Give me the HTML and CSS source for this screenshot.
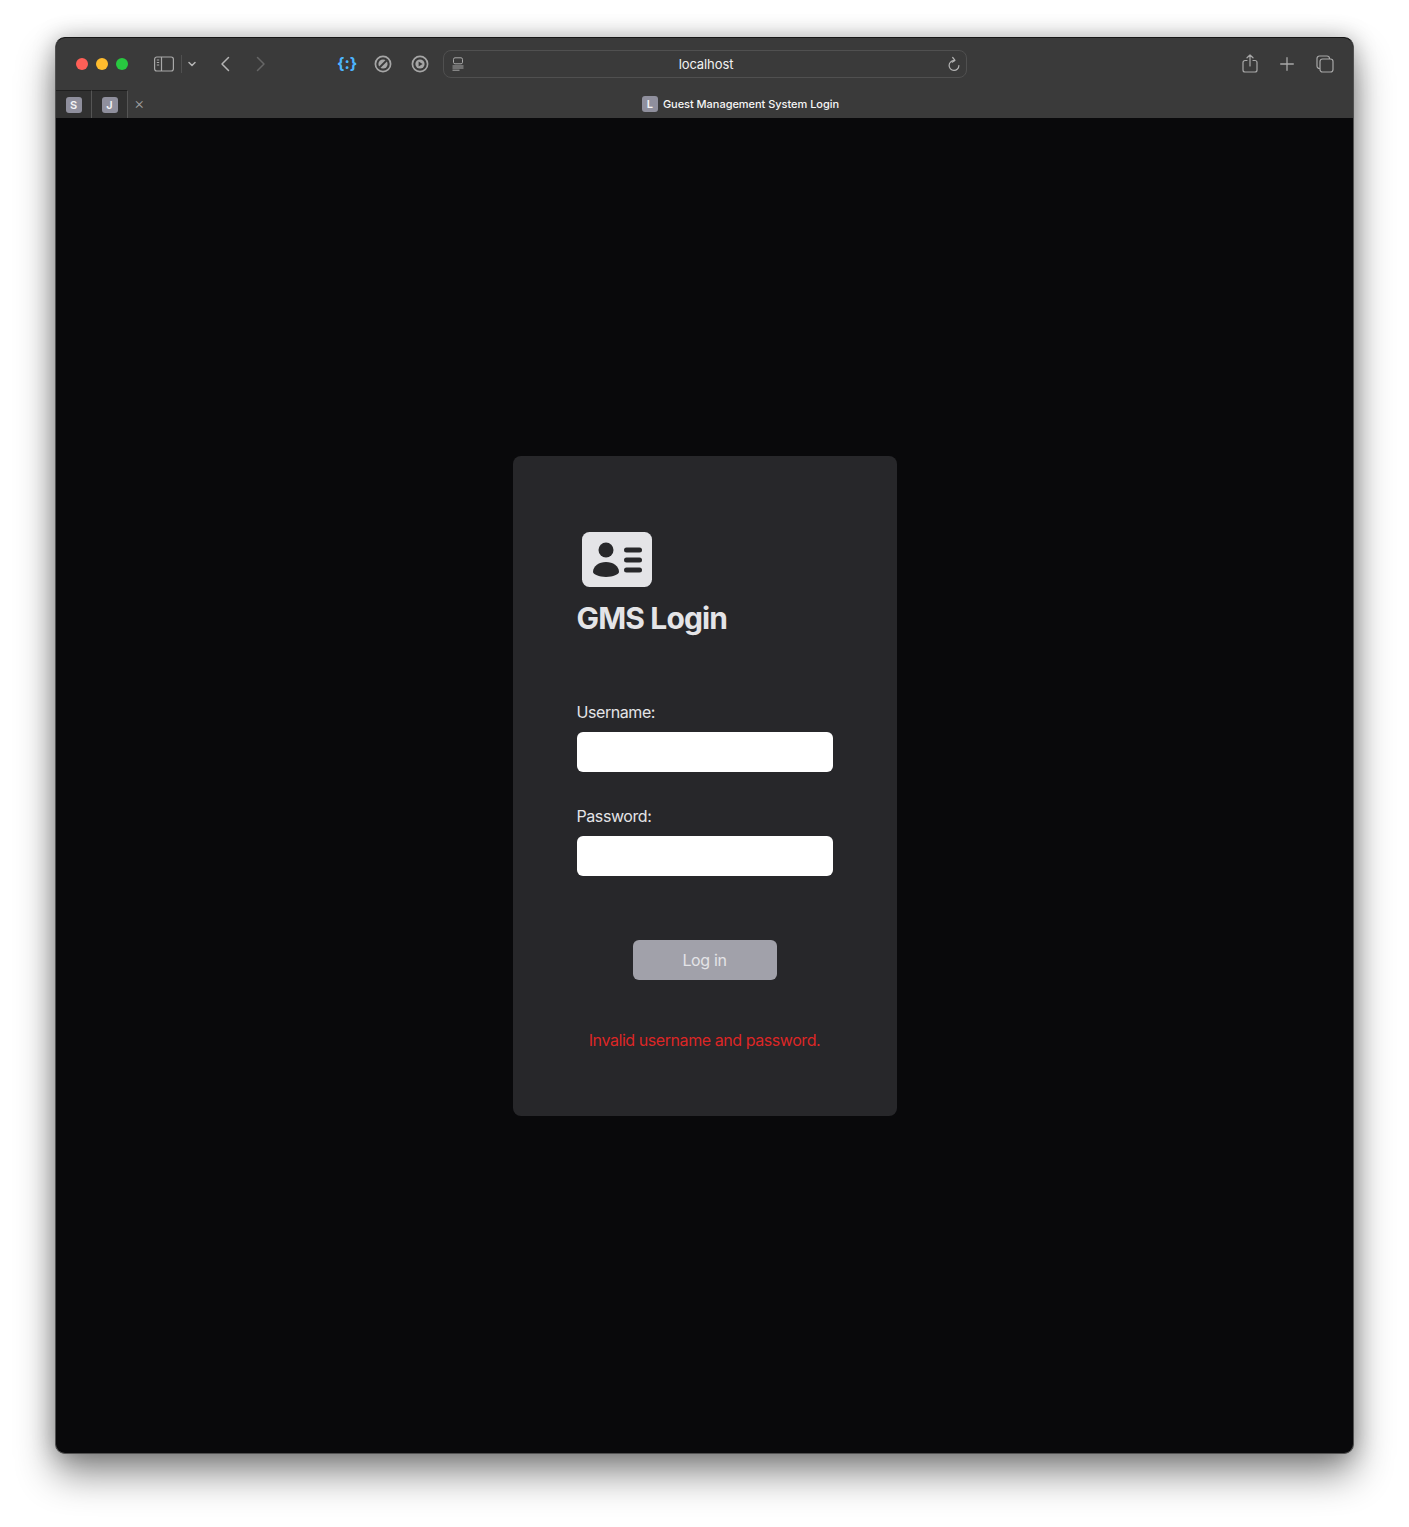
FILE: index.html
```html
<!DOCTYPE html>
<html lang="en">
<head>
  <meta charset="UTF-8">
  <title>Guest Management System Login</title>
  <link rel="stylesheet" href="styles.css">
  <meta name="viewport" content="width=device-width, initial-scale=1.0">
</head>
<body>

<div class="window">

  <div class="toolbar">
    <div class="lights">
      <span class="light red"></span>
      <span class="light yellow"></span>
      <span class="light green"></span>
    </div>

    <svg class="icon sidebar-icon" width="20" height="16" viewBox="0 0 20 16" fill="none" stroke="#a8a8a8" stroke-width="1.2">
      <rect x="0.6" y="1" width="18.8" height="14" rx="2.2"/>
      <path d="M7.5 1v14"/>
      <path d="M2.8 4h2.4M2.8 6.500h2.400M2.800 9h2.400" stroke-width="1"/>
    </svg>
    <span class="sep"></span>
    <svg class="icon chevron-icon" width="8" height="6" viewBox="0 0 8 6" fill="none" stroke="#b4b4b4" stroke-width="1.5" stroke-linecap="round" stroke-linejoin="round">
      <path d="M1 1.500l3 3 3-3"/>
    </svg>
    <svg class="icon back-icon" width="10" height="16" viewBox="0 0 10 16" fill="none" stroke="#b4b4b4" stroke-width="1.5" stroke-linecap="round" stroke-linejoin="round">
      <path d="M8.500 1.500L2 8l6.500 6.500"/>
    </svg>
    <svg class="icon forward-icon" width="10" height="16" viewBox="0 0 10 16" fill="none" stroke="#666" stroke-width="1.500" stroke-linecap="round" stroke-linejoin="round">
      <path d="M1.500 1.500L8 8l-6.500 6.500"/>
    </svg>

    <span class="ext-braces">{:}</span>
    <svg class="icon ext-icon compass" width="18" height="18" viewBox="0 0 18 18" fill="none" stroke="#a6a6a6">
      <circle cx="9" cy="9" r="7.600" stroke-width="1.700"/>
      <circle cx="9" cy="9" r="4.600" fill="#a6a6a6" stroke="none"/>
      <path d="M5.500 12.500l7-7" stroke="#3a3a3a" stroke-width="1.800"/>
    </svg>
    <svg class="icon ext-icon target" width="18" height="18" viewBox="0 0 18 18" fill="none" stroke="#a6a6a6">
      <circle cx="9" cy="9" r="7.600" stroke-width="1.700"/>
      <circle cx="9" cy="9" r="4.600" fill="#a6a6a6" stroke="none"/>
      <path d="M7.600 6.400v5.200L11.600 9z" fill="#3a3a3a" stroke="none"/>
    </svg>

    <div class="address">
      <svg width="12" height="14" viewBox="0 0 12 14" fill="none" stroke="#a8a8a8" stroke-width="1">
        <rect x="1.500" y="0.800" width="9" height="6" rx="1.500"/>
        <path d="M0.500 9h11M0.500 11h11M0.500 13.200h7"/>
      </svg>
      <span class="address-text">localhost</span>
      <svg width="12" height="16" viewBox="0 0 12 16" fill="none" stroke="#b4b4b4" stroke-width="1.200" stroke-linecap="round" stroke-linejoin="round">
        <path d="M6.300 4.600a4.900 4.900 0 1 0 4.600 4.900"/>
        <path d="M4.700 1.500L7 4.300 4.200 6.200"/>
      </svg>
    </div>

    <div class="toolbar-right">
      <svg class="icon" width="16" height="19" viewBox="0 0 16 19" fill="none" stroke="#a8a8a8" stroke-width="1.200" stroke-linecap="round" stroke-linejoin="round">
        <path d="M5 6.500H3a2 2 0 0 0-2 2V16a2 2 0 0 0 2 2h10a2 2 0 0 0 2-2V8.500a2 2 0 0 0-2-2h-2"/>
        <path d="M8 12V1M5 3.800L8 1l3 2.800"/>
      </svg>
      <svg class="icon" width="14" height="14" viewBox="0 0 14 14" fill="none" stroke="#a8a8a8" stroke-width="1.300" stroke-linecap="round">
        <path d="M7 0.700v12.600M0.700 7h12.600"/>
      </svg>
      <svg class="icon" width="18" height="18" viewBox="0 0 18 18" fill="none" stroke="#a8a8a8" stroke-width="1.200">
        <path d="M4 13.500H3.500a2.500 2.500 0 0 1-2.500-2.500V3.500A2.500 2.500 0 0 1 3.500 1H11a2.500 2.500 0 0 1 2.500 2.500V4"/>
        <rect x="4" y="4" width="13" height="13" rx="2.500"/>
      </svg>
    </div>
  </div>

  <div class="tabbar">
    <div class="tab"><span class="favicon">S</span></div>
    <div class="tab"><span class="favicon">J</span></div>
    <div class="tab-active">
      <span class="tab-close">&times;</span>
      <div class="tab-title"><span class="favicon">L</span>Guest Management System Login</div>
    </div>
  </div>

  <div class="page">
    <form class="card">
      <svg class="logo" width="80" height="80" viewBox="0 0 80 80">
        <rect x="5" y="12" width="70" height="55" rx="7.500" fill="#e4e4e7"/>
        <circle cx="29" cy="30" r="7.500" fill="#28282a"/>
        <path d="M16 52c0-6 6-10 13-10s13 4 13 10c0 2-6 5-13 5s-13-3-13-5z" fill="#28282a"/>
        <rect x="47" y="27.500" width="18" height="5" rx="2.500" fill="#28282a"/>
        <rect x="47" y="37.500" width="18" height="5" rx="2.500" fill="#28282a"/>
        <rect x="47" y="47.500" width="18" height="5" rx="2.500" fill="#28282a"/>
      </svg>
      <h1 class="title">GMS Login</h1>

      <label class="field-label" for="username">Username:</label>
      <input class="field-input" type="text" id="username">

      <label class="field-label second" for="password">Password:</label>
      <input class="field-input" type="password" id="password">

      <button class="login-btn" type="button">Log in</button>

      <p class="error">Invalid username and password.</p>
    </form>
  </div>

</div>

</body>
</html>
```

FILE: styles.css
```css
* {
  box-sizing: border-box;
}

body {
  margin: 0;
  padding: 37px 55px 73px;
  background-color: #fff;
  font-family: Inter, "Liberation Sans", sans-serif;
}

.window {
  height: 1417px;
  display: flex;
  flex-direction: column;
  border: 1px solid #515151;
  border-top-color: #161616;
  border-radius: 10px;
  overflow: hidden;
  background-color: #09090b;
  box-shadow: 0 20px 38px rgba(0, 0, 0, 0.45), 0 0 22px rgba(0, 0, 0, 0.25);
}

/* toolbar */

.toolbar {
  height: 52px;
  display: flex;
  align-items: center;
  padding-left: 20px;
  background-color: #3a3a3a;
  flex-shrink: 0;
}

.lights {
  display: flex;
  gap: 8px;
}

.light {
  width: 12px;
  height: 12px;
  border-radius: 50%;
}

.red { background-color: #ff5f57; }
.yellow { background-color: #febc2e; }
.green { background-color: #28c840; }

.icon {
  flex-shrink: 0;
  display: block;
  margin-bottom: 1px;
}

.sidebar-icon { margin-left: 26px; }

.sep {
  width: 1px;
  height: 18px;
  margin-left: 7px;
  background-color: #505050;
}

.chevron-icon { margin-left: 6px; }
.back-icon { margin-left: 24px; }
.forward-icon { margin-left: 26px; }

.ext-braces {
  width: 20px;
  margin-left: 71px;
  margin-bottom: 2px;
  color: #4cb5ff;
  font-size: 16px;
  font-weight: 700;
  text-align: center;
  white-space: nowrap;
}

.compass { margin-left: 17px; }
.target { margin-left: 19px; }

.address {
  width: 524px;
  height: 28px;
  margin-left: 14px;
  padding: 0 6px 0 8px;
  display: grid;
  grid-template-columns: 12px 1fr 12px;
  align-items: center;
  border: 1px solid #505050;
  border-radius: 8px;
  flex-shrink: 0;
}

.address-text {
  color: #f2f2f2;
  font-size: 13px;
  letter-spacing: -0.1px;
  text-align: center;
}

.toolbar-right {
  margin-left: auto;
  padding-right: 19px;
  display: flex;
  align-items: center;
  gap: 22px;
}

/* tabs */

.tabbar {
  height: 28px;
  display: flex;
  background-color: #3a3a3a;
  flex-shrink: 0;
}

.tab {
  width: 36px;
  display: flex;
  align-items: center;
  justify-content: center;
  background-color: #313131;
  border-top: 1px solid #1f1f1f;
  border-right: 1px solid #555;
}

.favicon {
  width: 16px;
  height: 16px;
  display: flex;
  align-items: center;
  justify-content: center;
  border-radius: 3px;
  background-color: #8f8f9d;
  color: #f4f4f5;
  font-size: 11px;
  font-weight: 600;
  flex-shrink: 0;
}

.tab-active {
  flex: 1;
  display: grid;
  grid-template-columns: 1fr auto 1fr;
  align-items: center;
}

.tab-close {
  padding-left: 6px;
  margin-bottom: 2px;
  color: #a0a0a0;
  font-size: 16px;
  font-weight: 300;
}

.tab-title {
  grid-column: 2;
  display: flex;
  align-items: center;
  gap: 5px;
  color: #f6f6f6;
  font-size: 11px;
  font-weight: 500;
  letter-spacing: -0.03px;
}

/* login page */

.page {
  flex: 1;
  display: flex;
  align-items: center;
  justify-content: center;
}

.card {
  width: 384px;
  height: 660px;
  padding: 64px;
  display: flex;
  flex-direction: column;
  background-color: #27272a;
  border-radius: 8px;
}

.logo {
  display: block;
}

.title {
  margin: 0 0 64px;
  color: #e4e4e7;
  font-size: 30px;
  line-height: 36px;
  font-weight: 700;
  letter-spacing: -0.85px;
}

.field-label {
  margin-bottom: 8px;
  color: #e4e4e7;
  font-size: 16px;
  line-height: 24px;
  letter-spacing: -0.42px;
}

.second {
  margin-top: 32px;
}

.field-input {
  width: 100%;
  height: 40px;
  border: none;
  border-radius: 6px;
  background-color: #fff;
}

.login-btn {
  width: 144px;
  height: 40px;
  margin: 64px auto 0;
  border: none;
  border-radius: 6px;
  background-color: #a1a1aa;
  color: #e4e4e7;
  font-family: inherit;
  font-size: 16px;
  letter-spacing: -0.35px;
}

.error {
  margin: 48px 0 0;
  color: #dc2626;
  font-size: 16px;
  line-height: 24px;
  letter-spacing: -0.43px;
  text-align: center;
}
```
